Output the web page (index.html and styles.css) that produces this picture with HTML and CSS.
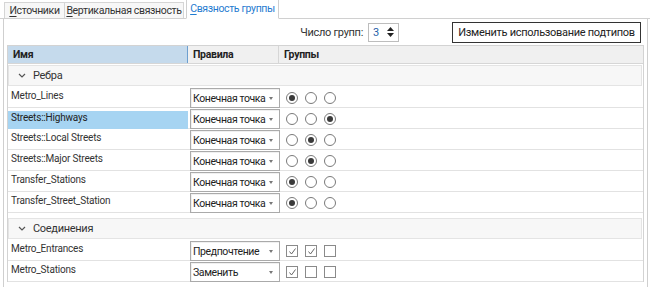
FILE: index.html
```html
<!DOCTYPE html>
<html lang="ru">
<head>
  <meta charset="UTF-8">
  <title>Связность группы</title>
  <link rel="stylesheet" href="styles.css">
</head>
<body>

<div class="tabs">
  <div class="tab t1"><u>И</u>сточники</div>
  <div class="tab t2"><u>В</u>ертикальная связность</div>
  <div class="tab active"><u>С</u>вязность группы</div>
</div>

<div class="panel">
  <div class="toolbar">
    <span class="label">Число групп:</span>
    <div class="spinner">
      <span>3</span>
      <svg class="spin-arrows" width="7" height="12" viewBox="0 0 7 12">
        <polygon points="3.5,1 7,5 0,5" fill="#222"/>
        <polygon points="0,7 7,7 3.5,11" fill="#222"/>
      </svg>
    </div>
    <button class="btn">Изменить использование подтипов</button>
  </div>

  <div class="grid">
    <div class="head">
      <div class="hcell name-col">Имя</div>
      <div class="hcell rule-col">Правила</div>
      <div class="hcell">Группы</div>
    </div>

    <div class="group-row">
      <svg class="chev" width="8" height="5" viewBox="0 0 8 5"><polyline points="1,1 4,4 7,1" fill="none" stroke="#555" stroke-width="1.2"/></svg>
      Ребра
    </div>

    <div class="row">
      <div class="name">Metro_Lines</div>
      <div class="select">Конечная точка<span class="caret"></span></div>
      <div class="marks"><span class="radio on"></span><span class="radio"></span><span class="radio"></span></div>
    </div>
    <div class="row">
      <div class="name selected">Streets::Highways</div>
      <div class="select">Конечная точка<span class="caret"></span></div>
      <div class="marks"><span class="radio"></span><span class="radio"></span><span class="radio on"></span></div>
    </div>
    <div class="row">
      <div class="name">Streets::Local Streets</div>
      <div class="select">Конечная точка<span class="caret"></span></div>
      <div class="marks"><span class="radio"></span><span class="radio on"></span><span class="radio"></span></div>
    </div>
    <div class="row">
      <div class="name">Streets::Major Streets</div>
      <div class="select">Конечная точка<span class="caret"></span></div>
      <div class="marks"><span class="radio"></span><span class="radio on"></span><span class="radio"></span></div>
    </div>
    <div class="row">
      <div class="name">Transfer_Stations</div>
      <div class="select">Конечная точка<span class="caret"></span></div>
      <div class="marks"><span class="radio on"></span><span class="radio"></span><span class="radio"></span></div>
    </div>
    <div class="row">
      <div class="name">Transfer_Street_Station</div>
      <div class="select">Конечная точка<span class="caret"></span></div>
      <div class="marks"><span class="radio on"></span><span class="radio"></span><span class="radio"></span></div>
    </div>

    <div class="group-row second">
      <svg class="chev" width="8" height="5" viewBox="0 0 8 5"><polyline points="1,1 4,4 7,1" fill="none" stroke="#555" stroke-width="1.2"/></svg>
      Соединения
    </div>

    <div class="row">
      <div class="name">Metro_Entrances</div>
      <div class="select">Предпочтение<span class="caret"></span></div>
      <div class="marks">
        <span class="check"><svg width="9" height="9" viewBox="0 0 9 9"><polyline points="1.5,4.5 3.5,7 7.5,1.5" fill="none" stroke="#666" stroke-width="1"/></svg></span>
        <span class="check"><svg width="9" height="9" viewBox="0 0 9 9"><polyline points="1.5,4.5 3.5,7 7.5,1.5" fill="none" stroke="#666" stroke-width="1"/></svg></span>
        <span class="check"></span>
      </div>
    </div>
    <div class="row">
      <div class="name">Metro_Stations</div>
      <div class="select">Заменить<span class="caret"></span></div>
      <div class="marks">
        <span class="check"><svg width="9" height="9" viewBox="0 0 9 9"><polyline points="1.5,4.5 3.5,7 7.5,1.5" fill="none" stroke="#666" stroke-width="1"/></svg></span>
        <span class="check"></span>
        <span class="check"></span>
      </div>
    </div>
  </div>
</div>

</body>
</html>
```

FILE: styles.css
```css
body {
  margin: 0;
  font-family: Roboto, 'Noto Sans', sans-serif;
  font-size: 11px;
  letter-spacing: -0.3px;
  color: #333;
  background: #fff;
  width: 650px;
  height: 287px;
  overflow: hidden;
  white-space: nowrap;
}
u { text-decoration: underline; text-underline-offset: 2px; }

.tabs {
  display: flex;
  align-items: flex-end;
  height: 18px;
  padding-left: 4px;
  border-bottom: 1px solid #d0d0d0;
}
.tab {
  height: 15px;
  line-height: 15px;
  text-align: center;
  border: 1px solid #d5d5d5;
  border-bottom: none;
  border-right: none;
  background: #f7f7f7;
  color: #333;
  font-size: 10.5px;
  letter-spacing: -0.35px;
}
.t1 { width: 59px; }
.t2 { width: 118px; border-right: 1px solid #d5d5d5; }
.tab.active {
  width: 91px;
  height: 18px;
  line-height: 18px;
  margin-left: 2px;
  margin-bottom: -1px;
  background: #fff;
  color: #1f7bd0;
  border: 1px solid #d0d0d0;
  border-bottom: 1px solid #fff;
}

.panel {
  margin-left: 3px;
  width: 643px;
  height: 268px;
  border-left: 1px solid #cfcfcf;
  border-right: 1px solid #cfcfcf;
}

.toolbar {
  display: flex;
  align-items: center;
  justify-content: flex-end;
  height: 26px;
  padding-right: 6px;
}
.label { margin-right: 5px; }
.spinner {
  display: flex;
  align-items: center;
  justify-content: space-between;
  width: 21px;
  height: 17px;
  padding: 0 4px;
  border: 1px solid #bdbdbd;
  color: #1f5fa8;
  margin-right: 53px;
}
.btn {
  font-family: inherit;
  font-size: 11px;
  letter-spacing: -0.3px;
  color: #222;
  background: #fff;
  border: 1px solid #333;
  height: 21px;
  width: 189px;
  padding: 0;
}

.grid {
  margin: 0 3px;
  border: 1px solid #d3d3d3;
  border-bottom: none;
}
.head {
  display: grid;
  grid-template-columns: 180px 91px 1fr;
  height: 17px;
  background: #f0f0f0;
  border-bottom: 1px solid #d6d6d6;
  font-weight: bold;
  font-size: 10.5px;
  color: #222;
}
.hcell {
  line-height: 17px;
  padding-left: 5px;
}
.name-col {
  background: #c5daec;
  border-right: 1px solid #6d9fcf;
}
.rule-col { border-right: 1px solid #d6d6d6; }

.group-row {
  display: flex;
  align-items: center;
  height: 19px;
  margin: 1px 1px 1px 0;
  padding-left: 9px;
  background: #f7f7f7;
  border: 1px solid #e4e4e4;
}
.group-row.second { margin-top: 5px; }
.chev { margin-right: 7px; }

.row {
  display: grid;
  grid-template-columns: 180px 91px 1fr;
  height: 20px;
  border-bottom: 1px solid #e2e2e2;
}
.name {
  padding: 2px 0 0 3px;
  line-height: 14px;
  margin-bottom: -1px;
  font-size: 10px;
  letter-spacing: -0.2px;
}
.name.selected {
  margin-top: 3px;
  padding-top: 0;
  background: #a6d4f2;
  color: #222;
}
.select {
  position: relative;
  align-self: end;
  margin: 0 0 -1px 2px;
  width: 86px;
  height: 18px;
  line-height: 19px;
  padding-left: 2px;
  border: 1px solid #aaa;
  box-shadow: inset 1px 1px 0 #f0f0f0;
  font-size: 10.5px;
  letter-spacing: -0.4px;
  color: #222;
  background: #fff;
}
.caret {
  position: absolute;
  right: 6px;
  top: 8px;
  border-left: 2px solid transparent;
  border-right: 2px solid transparent;
  border-top: 3px solid #777;
}
.marks {
  display: flex;
  align-items: center;
  gap: 7px;
  padding: 2px 0 0 7px;
}
.radio {
  position: relative;
  width: 10px;
  height: 10px;
  border: 1px solid #7a7a7a;
  border-radius: 50%;
  background: #fff;
}
.radio.on::after {
  content: '';
  position: absolute;
  left: 2px;
  top: 2px;
  width: 6px;
  height: 6px;
  border-radius: 50%;
  background: #3a3a3a;
}
.check {
  display: flex;
  align-items: center;
  justify-content: center;
  width: 10px;
  height: 10px;
  border: 1px solid #8a8a8a;
  background: #fff;
}
```
